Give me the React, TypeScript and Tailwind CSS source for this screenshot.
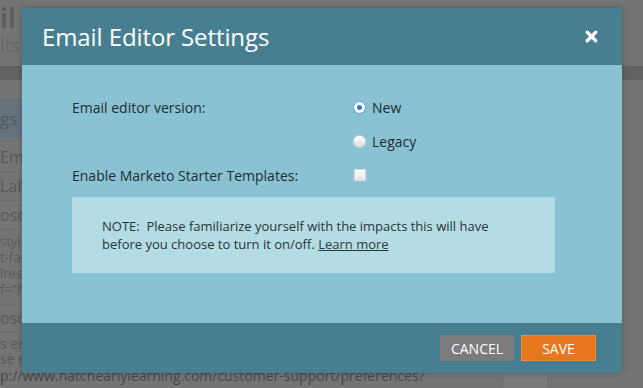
import { X } from "lucide-react";

function Radio({ checked, label }: { checked?: boolean; label: string }) {
  return (
    <label className="flex items-center gap-[6px]">
      <span
        className={
          checked
            ? "w-[13px] h-[13px] rounded-full bg-white border border-[#5b9bd5] flex items-center justify-center"
            : "w-[13px] h-[13px] rounded-full bg-gradient-to-b from-white to-[#dcdcdc] border border-[#c8d8dc]"
        }
      >
        {checked && <span className="w-[5px] h-[5px] rounded-full bg-[#3b78b8]" />}
      </span>
      <span className="text-[14px] text-[#1f2b2e]">{label}</span>
    </label>
  );
}

// page behind the dialog, only its left strip shows
function Background() {
  const lines = ["Ema", "Lab", "oscr"];
  return (
    <div className="flex flex-col w-full h-full text-[#555]">
      <div className="h-[32px] flex items-end text-[26px] font-bold leading-none text-[#5c5c5c]">
        <span className="w-[22px] overflow-hidden">il</span>
      </div>
      <div className="h-[30px] flex items-center text-[18px] text-[#666]">
        <span className="w-[22px] overflow-hidden whitespace-nowrap">lts</span>
      </div>
      <div className="h-[6px]" />
      <div className="h-[15px] bg-[#636363]" />
      <div className="h-[20px]" />
      <div className="h-[40px] w-[200px] bg-[#66717a] flex items-center text-[17px] text-[#4f5a60]">
        <span className="w-[22px] overflow-hidden">gs</span>
      </div>
      <div className="flex flex-col text-[16px] text-[#585858] pt-[5px]">
        {lines.map((l) => (
          <div key={l} className="h-[29px] flex items-center border-b border-[#6c6c6c] w-[200px]">
            <span className="w-[22px] overflow-hidden whitespace-nowrap">{l}</span>
          </div>
        ))}
        <div className="w-[200px] border-b border-[#6c6c6c] pt-[3px] pb-[8px]">
          <div className="w-[22px] overflow-hidden whitespace-nowrap leading-[16px] text-[13px]">
            styl
            <br />
            t-far
            <br />
            lres
            <br />
            f="h
          </div>
        </div>
        <div className="h-[26px] flex items-center border-b border-[#6c6c6c] w-[200px]">
          <span className="w-[22px] overflow-hidden whitespace-nowrap">oscr</span>
        </div>
        <div className="pt-[4px]">
          <div className="w-[22px] overflow-hidden whitespace-nowrap leading-[15px] text-[14px]">
            s en
            <br />
            se e
          </div>
        </div>
        <div className="flex pt-[2px]">
          <div className="w-[503px] border-r border-[#6a6a6a] text-[14px] leading-[16px] text-[#474747]">
            p://www.hatchearlylearning.com/customer-support/preferences?
          </div>
          <div className="w-[44px] h-[20px] bg-[#7a7a7a]" />
        </div>
      </div>
    </div>
  );
}

export default function App() {
  return (
    <div className="relative w-[643px] h-[388px] overflow-hidden bg-[#747474] font-['Open_Sans',sans-serif]">
      <Background />
      <div className="absolute left-[22px] top-[8px] w-[600px] flex flex-col shadow-[0_0_6px_rgba(0,0,0,0.25)]">
        <div className="h-[57px] bg-[#477f91] flex items-center justify-between pl-[20px] pr-[22px]">
          <h1 className="text-[24px] text-white leading-none tracking-[-0.1px]">Email Editor Settings</h1>
          <X className="w-[17px] h-[17px] text-white" strokeWidth={4.5} />
        </div>
        <div className="h-[258px] bg-[#89c3d3] pl-[50px] pt-[25px]">
          <div className="flex h-[34px] items-center">
            <div className="w-[281px] text-[14px] text-[#1f2b2e]">Email editor version:</div>
            <Radio checked label="New" />
          </div>
          <div className="flex h-[34px] items-center">
            <div className="w-[281px]" />
            <Radio label="Legacy" />
          </div>
          <div className="flex h-[34px] items-center">
            <div className="w-[282px] text-[14px] text-[#1f2b2e]">Enable Marketo Starter Templates:</div>
            <span className="w-[12px] h-[12px] bg-gradient-to-b from-white to-[#e4e4e4] border border-[#cfdde0] rounded-[1px]" />
          </div>
          <div className="mt-[5px] w-[483px] h-[76px] bg-[#b4dce4] pl-[30px] pt-[20px] text-[13px] leading-[18px] text-[#2b3436]">
            <p>
              NOTE:&nbsp; Please familiarize yourself with the impacts this will have
              <br />
              before you choose to turn it on/off.{" "}
              <a className="underline text-[#2b3a40]">Learn more</a>
            </p>
          </div>
        </div>
        <div className="h-[50px] bg-[#477f91] flex items-center justify-end gap-[7px] pr-[26px]">
          <button className="w-[74px] h-[26px] bg-[#7b7b7b] text-white text-[14px] uppercase">Cancel</button>
          <button className="w-[75px] h-[26px] bg-[#e8761f] border border-[#f08a3a] text-white text-[14px] uppercase">
            Save
          </button>
        </div>
      </div>
    </div>
  );
}
